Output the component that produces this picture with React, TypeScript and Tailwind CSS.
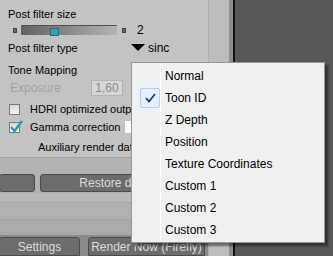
import React from "react";

const items = [
  "Normal",
  "Toon ID",
  "Z Depth",
  "Position",
  "Texture Coordinates",
  "Custom 1",
  "Custom 2",
  "Custom 3",
];

const Checkbox = ({ checked }: { checked?: boolean }) => (
  <div className="relative shrink-0 w-[11px] h-[11px] border border-[#7a7a7a] bg-gradient-to-b from-[#d8d8d8] to-[#f4f4f4]">
    {checked && (
      <svg className="absolute -top-[4px] -left-[1px]" width="15" height="15" viewBox="0 0 15 15">
        <path d="M2 8 L5.5 12 L13 2" fill="none" stroke="#1aa3b0" strokeWidth="2.4" />
      </svg>
    )}
  </div>
);

const DarkButton = ({ className, children }: { className: string; children?: React.ReactNode }) => (
  <div
    className={`h-[18px] shrink-0 rounded-[3px] border border-[#4c4c4c] bg-[#6c6c6c] text-[#dcdcdc] text-[12px] whitespace-nowrap flex items-center justify-center ${className}`}
  >
    {children}
  </div>
);

export default function App() {
  return (
    <div
      className="relative w-[333px] h-[256px] overflow-hidden flex bg-[#575757]"
      style={{ fontFamily: '"Liberation Sans", Arial, sans-serif' }}
    >
      {/* settings panel */}
      <div className="w-[209px] shrink-0 flex flex-col bg-[#c3c3c3] text-[11px] text-black border-r border-[#b0b0b0]">
        <div className="h-[16px] mt-[6px] pl-[8px] flex items-center">Post filter size</div>

        {/* slider */}
        <div className="h-[16px] flex items-center">
          <div className="ml-[13px] w-[4px] h-[5px] bg-[#6a6a6a] border border-[#444]" />
          <div className="relative ml-[4px] w-[96px] h-[10px] rounded-[1px] bg-gradient-to-r from-[#626262] via-[#8a8a8a] to-[#b4b4b4] border-t border-[#505050]">
            <div className="absolute left-[29px] top-[2px] w-[9px] h-[8px] bg-[#3b9fae] border border-[#1f6f7a]" />
          </div>
          <div className="ml-[5px] w-[4px] h-[5px] bg-[#6a6a6a] border border-[#444]" />
          <span className="ml-[11px] text-[12px]">2</span>
        </div>

        <div className="h-[16px] mt-[2px] pl-[8px] flex items-center">
          <span className="w-[123px]">Post filter type</span>
          <svg width="14" height="8" viewBox="0 0 14 8">
            <path d="M0 0 H14 L7 7 Z" fill="#000" />
          </svg>
          <span className="ml-[3px] text-[12px]">sinc</span>
        </div>

        <div className="h-[16px] mt-[6px] pl-[8px] flex items-center">Tone Mapping</div>

        <div className="h-[16px] mt-[2px] pl-[10px] flex items-center">
          <span className="w-[81px] text-[#a2a2a2] text-[12px]">Exposure</span>
          <div className="w-[32px] h-[16px] bg-[#d6d6d6] border border-[#b4b4b4] text-[#8a8a8a] text-[12px] flex items-center justify-center">
            1,60
          </div>
        </div>

        <div className="h-[14px] mt-[6px] pl-[9px] flex items-center gap-[10px] whitespace-nowrap">
          <Checkbox />
          <span>HDRI optimized output</span>
        </div>

        <div className="h-[14px] mt-[4px] pl-[9px] flex items-center whitespace-nowrap">
          <Checkbox checked />
          <span className="ml-[10px] w-[95px] shrink-0">Gamma correction</span>
          <div className="w-[80px] h-[12px] shrink-0 bg-white" />
        </div>

        <div className="h-[14px] mt-[6px] pl-[38px] flex items-center whitespace-nowrap">
          Auxiliary render data
        </div>

        {/* lower, darker area */}
        <div className="mt-[3px] flex-1 flex flex-col bg-[#b2b2b2] border-t border-[#a4a4a4]">
          <div className="mt-[16px] flex gap-[5px]">
            <DarkButton className="w-[36px] -ml-[1px]" />
            <DarkButton className="w-[166px]">Restore defaults</DarkButton>
          </div>
          <div className="mt-[1px] h-[10px] bg-[#b9b9b9] border-b border-[#a6a6a6]" />
          <div className="h-[17px] bg-[#b0b0b0] border-b border-[#a2a2a2]" />
          <div className="h-[15px] bg-[#aaaaaa]" />
          <div className="flex-1 flex items-end gap-[8px] bg-[#8a8a8a] pt-[1px]">
            <DarkButton className="w-[81px] -ml-[1px] h-[19px] rounded-b-none">Settings</DarkButton>
            <DarkButton className="w-[117px] h-[19px] rounded-b-none">Render Now (Firefly)</DarkButton>
          </div>
        </div>
      </div>

      {/* side strip */}
      <div className="w-[20px] shrink-0 bg-[#bdbdbd]" />
      <div className="w-[4px] shrink-0 bg-[#8e8e8e]" />
      <div className="w-[2px] shrink-0 bg-[#111]" />
      <div className="flex-1 bg-[#585858]" />

      {/* popup menu */}
      <div className="absolute left-[131px] top-[62px] w-[194px] h-[181px] bg-[#f0f0f0] border border-[#979797] shadow-[3px_3px_2px_rgba(0,0,0,0.45)] py-[2px]">
        <div className="absolute left-[28px] top-[1px] bottom-[1px] w-[1px] bg-[#e2e2e2] border-r border-white" />
        {items.map((label, i) => (
          <div key={label} className="relative h-[22px] flex items-center text-[12px] text-black">
            <div className="w-[33px] flex items-center justify-center">
              {i === 1 && (
                <div className="ml-[3px] w-[20px] h-[20px] rounded-[2px] border border-[#aecff7] bg-[#e6effa] flex items-center justify-center">
                  <svg width="11" height="10" viewBox="0 0 11 10">
                    <path d="M1 5 L4 8.5 L10 1" fill="none" stroke="#1e3a8a" strokeWidth="1.8" />
                  </svg>
                </div>
              )}
            </div>
            <span>{label}</span>
          </div>
        ))}
      </div>
    </div>
  );
}
